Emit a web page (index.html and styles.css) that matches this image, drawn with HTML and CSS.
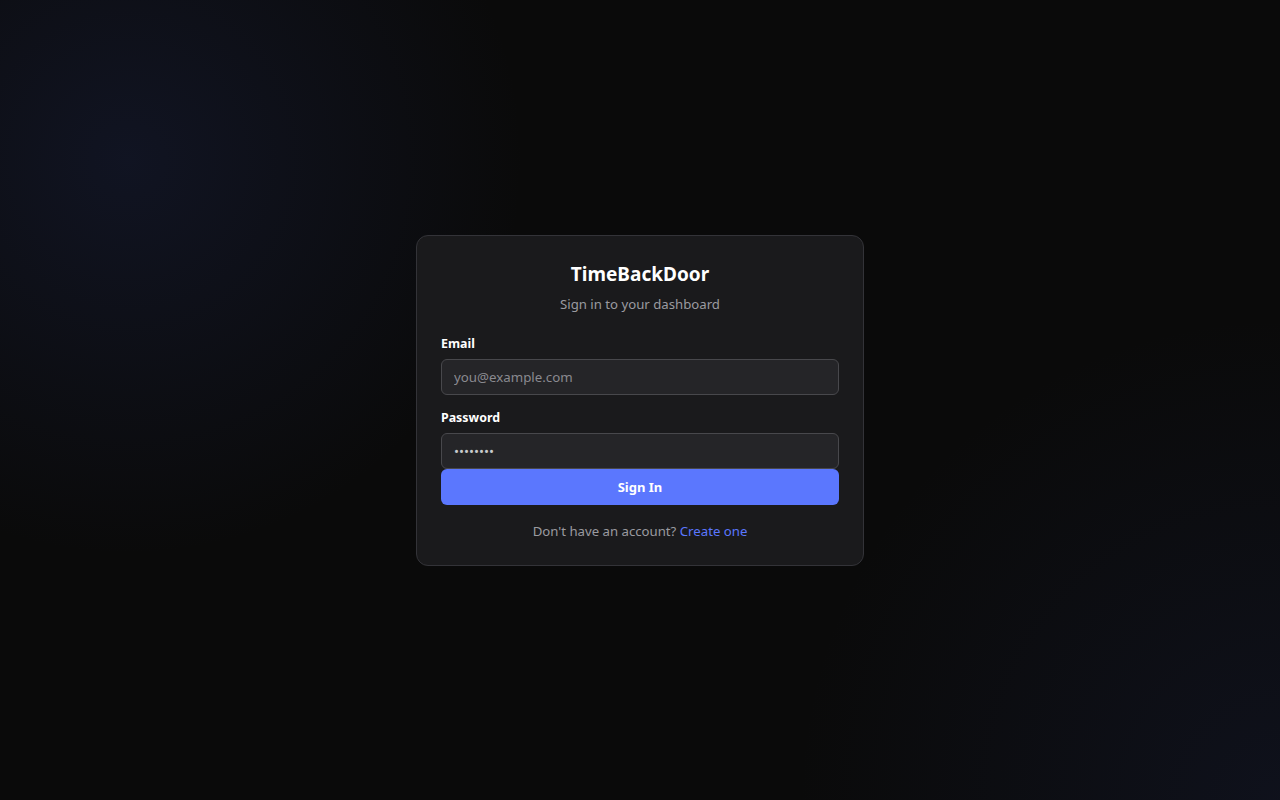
FILE: index.html
```html
<!doctype html>
<html>
<head>
<meta charset="utf-8">
<title>TimeBackDoor - Sign in</title>
<link rel="stylesheet" href="styles.css">
</head>

<body>
	<div class="page">
		<div class="card">
			<div class="card-head">
				<h1>TimeBackDoor</h1>
				<p>Sign in to your dashboard</p>
			</div>
			<form class="login">
				<div class="field">
					<label for="email">Email</label>
					<input type="email" id="email" placeholder="you@example.com">
				</div>
				<div class="field">
					<label for="password">Password</label>
					<input type="password" id="password" value="password">
				</div>
				<button type="button" class="btn">Sign In</button>
			</form>
			<p class="foot">Don't have an account? <a href="#">Create one</a></p>
		</div>
	</div>
</body>
</html>
```

FILE: styles.css
```css
html, body{ height:100%;}
body{ margin:0; background:#0a0a0a; color:#ededed; font-family:'Noto Sans', 'Open Sans', sans-serif;}
.page{ min-height:100%; display:flex; align-items:center; justify-content:center;
	background:
		radial-gradient(circle at 10% 20%, rgba(40,55,120,0.22), rgba(40,55,120,0) 30%),
		radial-gradient(circle at 100% 100%, rgba(40,55,120,0.16), rgba(40,55,120,0) 32%),
		#0a0a0a;}
.card{ width:398px; padding:24px; background:#1a1a1c; border:1px solid #333338; border-radius:12px;}
.card-head{ text-align:center; margin-bottom:20px;}
.card-head h1{ margin:0; font-size:19px; line-height:28px; font-weight:700; color:#fff;}
.card-head p{ margin:6px 0 0; font-size:13.2px; line-height:20px; color:#9a9aa0;}
.login{ display:flex; flex-direction:column;}
.field{ display:flex; flex-direction:column; gap:5px; margin-bottom:13px;}
.field:last-of-type{ margin-bottom:0;}
.field label{ font-size:12.4px; line-height:20px; font-weight:700; color:#fff;}
.field input{ box-sizing:border-box; height:36px; padding:0 12px; background:#252528; border:1px solid #48484c; border-radius:6px; color:#c8c8cc; font-family:inherit; font-size:13.3px; outline:none;}
.field input::placeholder{ color:#8a8a90;}
.btn{ height:36px; border:0; border-radius:6px; background:#5b77fe; color:#fff; font-family:inherit; font-size:13px; font-weight:700; cursor:pointer;}
.foot{ margin:16px 0 0; text-align:center; font-size:13.2px; line-height:20px; color:#9a9aa0;}
.foot a{ color:#5b77fe; text-decoration:none;}
```
